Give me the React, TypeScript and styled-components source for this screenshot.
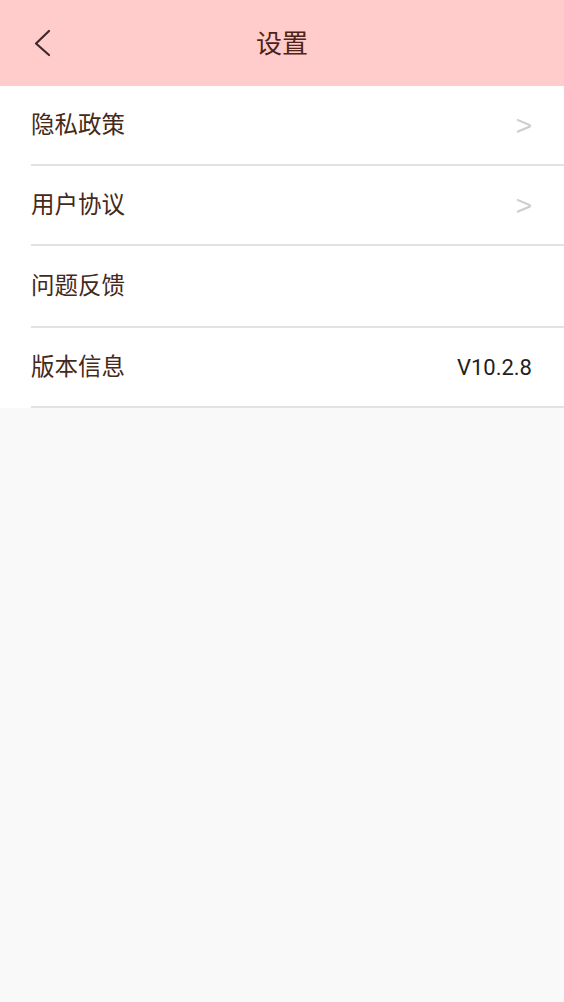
import styled, { createGlobalStyle } from "styled-components";

const GlobalStyle = createGlobalStyle`
  html, body {
    margin: 0;
    padding: 0;
    background: #f9f9f9;
  }
  body {
    font-family: Roboto, "Noto Sans CJK SC", sans-serif;
  }
`;

interface SettingItem {
  label: string;
  value?: string;
  arrow?: boolean;
  height: number;
}

const items: SettingItem[] = [
  { label: "隐私政策", arrow: true, height: 78 },
  { label: "用户协议", arrow: true, height: 78 },
  { label: "问题反馈", height: 80 },
  { label: "版本信息", value: "V10.2.8", height: 78 },
];

function BackIcon() {
  return (
    <svg width="22" height="30" viewBox="0 0 22 30">
      <polyline
        points="16,3 3,15.5 16,27"
        fill="none"
        stroke="#3b2a2a"
        strokeWidth="2.2"
        strokeLinecap="round"
        strokeLinejoin="round"
      />
    </svg>
  );
}

export default function App() {
  return (
    <>
      <GlobalStyle />
      <StyledPage>
        <StyledHeader>
          <StyledBack>
            <BackIcon />
          </StyledBack>
          <StyledTitle>设置</StyledTitle>
        </StyledHeader>
        <StyledList>
          {items.map((item) => (
            <StyledRow key={item.label} $height={item.height}>
              <StyledLabel>{item.label}</StyledLabel>
              {item.value && <StyledValue>{item.value}</StyledValue>}
              {item.arrow && <StyledArrow>&gt;</StyledArrow>}
            </StyledRow>
          ))}
        </StyledList>
      </StyledPage>
    </>
  );
}

const StyledPage = styled.div`
  min-height: 1002px;
  background: #f9f9f9;
`;

const StyledHeader = styled.header`
  position: relative;
  display: flex;
  align-items: center;
  justify-content: center;
  height: 86px;
  background: #ffcccb;
`;

const StyledBack = styled.div`
  position: absolute;
  left: 33px;
  top: 28px;
  display: flex;
`;

const StyledTitle = styled.h1`
  margin: 0;
  font-family: "Noto Sans CJK SC", sans-serif;
  font-size: 26px;
  font-weight: 400;
  color: #4f2418;
  transform: translateY(-2px);
`;

const StyledList = styled.div`
  display: flex;
  flex-direction: column;
  background: #fff;
`;

const StyledRow = styled.div<{ $height: number }>`
  display: flex;
  align-items: center;
  justify-content: space-between;
  height: ${(props) => props.$height}px;
  margin-left: 31px;
  padding-right: 32px;
  border-bottom: 2px solid #e2e2e2;
`;

const StyledLabel = styled.span`
  font-family: "Noto Sans CJK SC", sans-serif;
  font-size: 23.5px;
  color: #45291a;
  transform: translateY(-2px);
`;

const StyledValue = styled.span`
  font-family: Roboto, sans-serif;
  font-size: 22px;
  color: #1f1f1f;
`;

const StyledArrow = styled.span`
  font-family: "Liberation Sans", sans-serif;
  font-size: 28px;
  color: #cdcdcd;
  padding-top: 2px;
`;
